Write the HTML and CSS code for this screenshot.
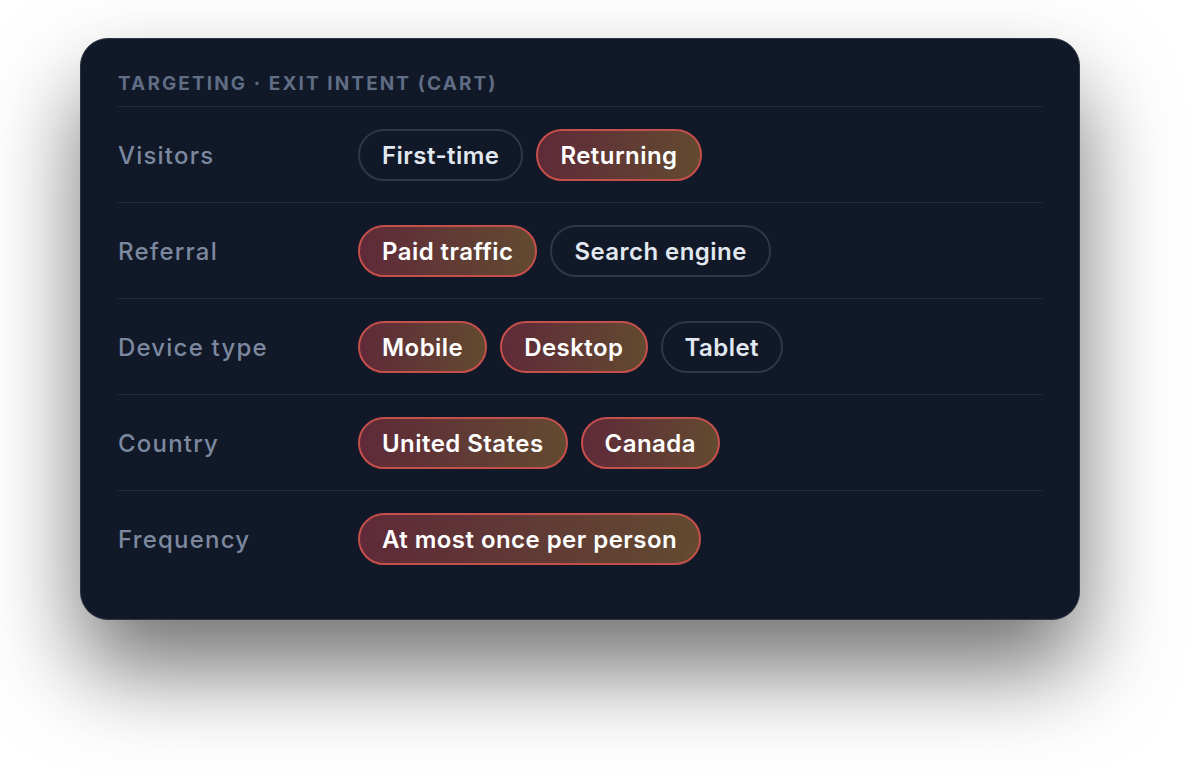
FILE: index.html
```html
<!DOCTYPE html>
<html lang="en">

<head>
    <meta charset="UTF-8">
    <meta name="viewport" content="width=device-width, initial-scale=1.0">
    <title>Targeting</title>
    <link rel="stylesheet" href="styles.css">
</head>

<body>
    <section class="card">
        <h2 class="card-title">Targeting · Exit intent (cart)</h2>

        <div class="rule">
            <span class="rule-label">Visitors</span>
            <div class="chips">
                <span class="chip">First-time</span>
                <span class="chip on">Returning</span>
            </div>
        </div>

        <div class="rule">
            <span class="rule-label">Referral</span>
            <div class="chips">
                <span class="chip on">Paid traffic</span>
                <span class="chip">Search engine</span>
            </div>
        </div>

        <div class="rule">
            <span class="rule-label">Device type</span>
            <div class="chips">
                <span class="chip on">Mobile</span>
                <span class="chip on">Desktop</span>
                <span class="chip">Tablet</span>
            </div>
        </div>

        <div class="rule">
            <span class="rule-label">Country</span>
            <div class="chips">
                <span class="chip on">United States</span>
                <span class="chip on">Canada</span>
            </div>
        </div>

        <div class="rule">
            <span class="rule-label">Frequency</span>
            <div class="chips">
                <span class="chip on">At most once per person</span>
            </div>
        </div>
    </section>
</body>

</html>
```

FILE: styles.css
```css
body {
    margin: 0;
    padding: 38px 80px;
    min-height: 780px;
    box-sizing: border-box;
    background-color: #ffffff;
    font-family: Inter, "Noto Sans", sans-serif;
}

.card {
    width: 1000px;
    box-sizing: border-box;
    padding: 33px 37px 33px;
    background-color: #111827;
    border: 1.5px solid #2c3546;
    border-radius: 28px;
    box-shadow: 0 50px 90px rgba(0, 0, 0, 0.55);
}

.card-title {
    margin: 0;
    padding-bottom: 10px;
    font-size: 19px;
    font-weight: 700;
    line-height: 24px;
    letter-spacing: 2.1px;
    text-transform: uppercase;
    color: #5f6d85;
    border-bottom: 1px solid #232c3b;
}

.rule {
    display: flex;
    align-items: center;
    padding: 22px 0 21px;
    border-bottom: 1px solid #232c3b;
}

.rule:last-child {
    border-bottom: none;
}

.rule-label {
    width: 240px;
    flex-shrink: 0;
    font-size: 24px;
    font-weight: 500;
    letter-spacing: 1.2px;
    color: #7c889f;
}

.chips {
    display: flex;
    gap: 13px;
}

/* pill toggle, outlined when off */
.chip {
    height: 52px;
    box-sizing: border-box;
    display: flex;
    align-items: center;
    padding: 0 22px;
    font-size: 24px;
    font-weight: 600;
    letter-spacing: 0.45px;
    color: #e2e8f0;
    border: 2px solid #2e3747;
    border-radius: 26px;
}

.chip.on {
    color: #ffffff;
    background: linear-gradient(90deg, #5f2a39, #624a30);
    border-color: #c54f4b;
}
```
